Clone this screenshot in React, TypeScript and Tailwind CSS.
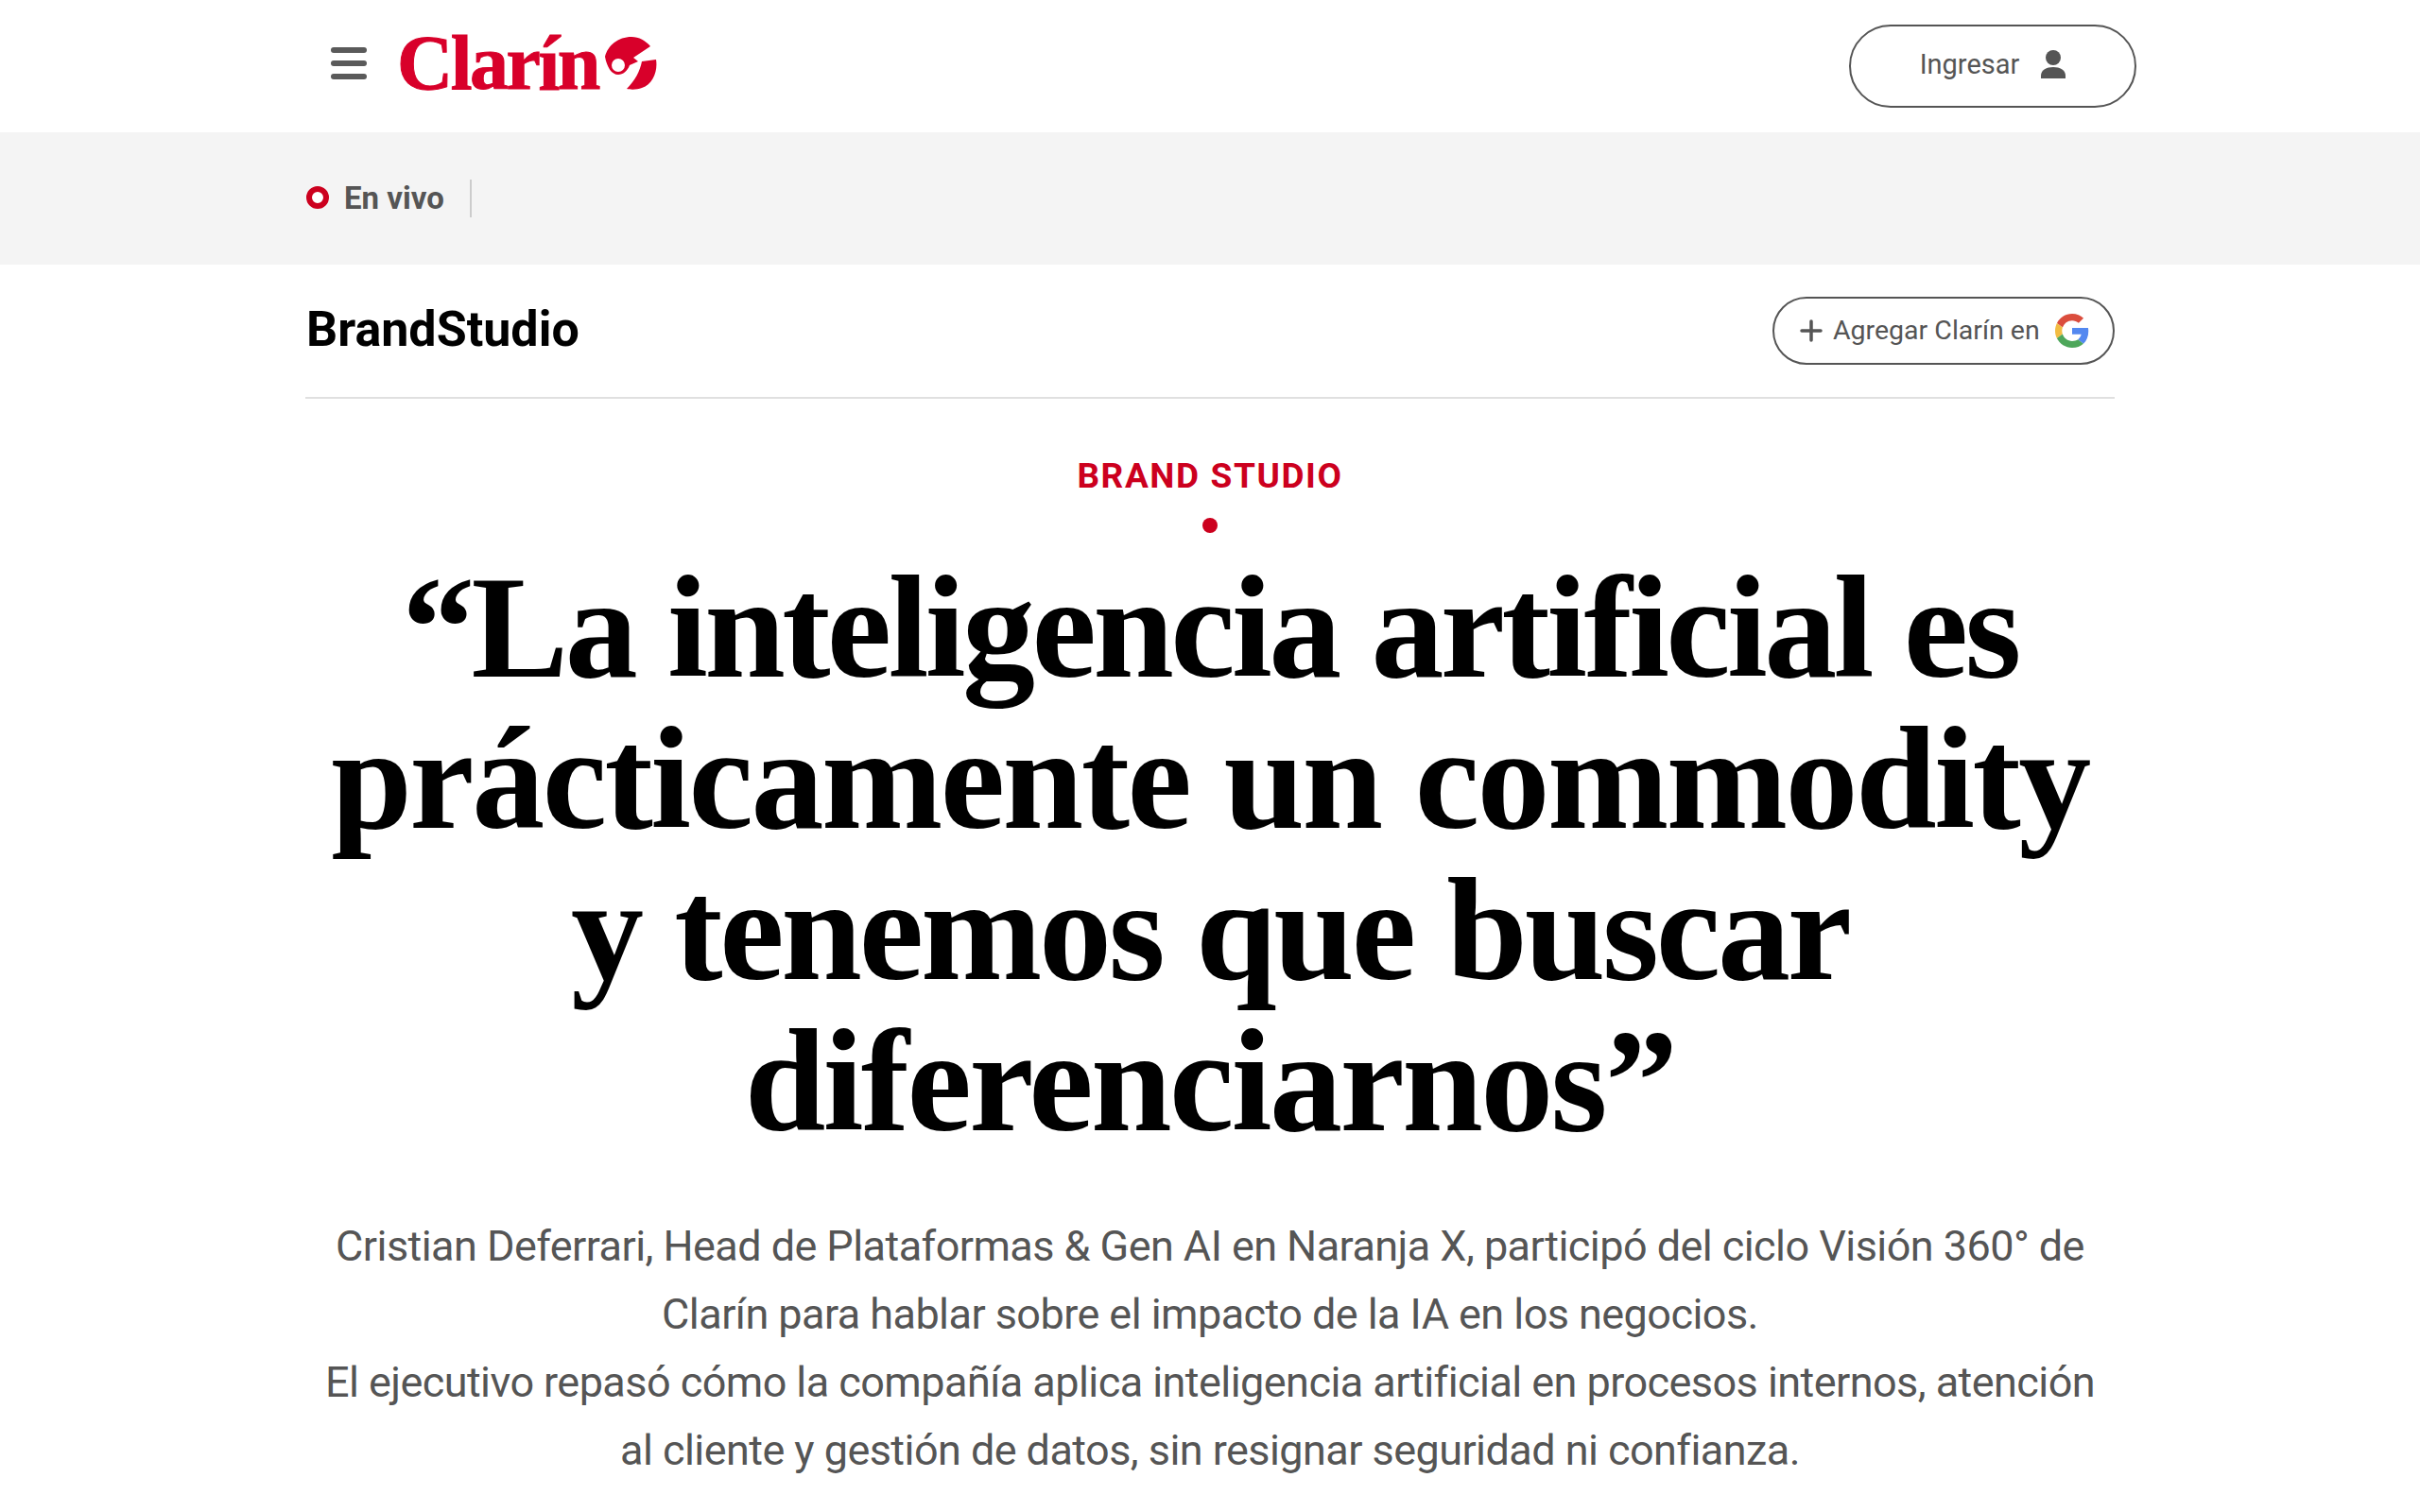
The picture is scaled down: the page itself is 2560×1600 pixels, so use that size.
import React from "react";

function Emblem() {
  return (
    <svg viewBox="0 0 56 56" className="w-[56px] h-[56px] ml-[6px]" fill="#d8002a">
      <path
        fillRule="evenodd"
        d="M1 21C4 9 15 0 29 0c8 0 15 4 20 10L31 22l5 4-9 4c-2 6-7 10-12 10C8 40 3 32 1 21zM22 30a7 7 0 1 1-14 0a7 7 0 1 1 14 0z"
      />
      <path d="M40 26l15-2c2 12-3 26-15 30-5 2-12 2-16 1 9-9 14-19 16-29z" />
    </svg>
  );
}

function GoogleIcon() {
  return (
    <svg viewBox="0 0 48 48" className="w-[36px] h-[36px]">
      <path fill="#DB4D3D" d="M24 9.500c3.500 0 6.700 1.200 9.200 3.600l6.900-6.900C35.900 2.400 30.500 0 24 0 14.600 0 6.500 5.400 2.600 13.200l8 6.200C12.400 13.700 17.700 9.500 24 9.500z" />
      <path fill="#5388F0" d="M47 24.500c0-1.600-.1-3.100-.4-4.500H24v9h12.900c-.6 3-2.200 5.500-4.700 7.200l7.700 6C44.400 38 47 31.800 47 24.500z" />
      <path fill="#F2BC42" d="M10.500 28.600c-.5-1.400-.8-3-.8-4.600s.3-3.200.8-4.600l-8-6.200C.9 16.500 0 20.100 0 24s.9 7.500 2.600 10.800l7.900-6.200z" />
      <path fill="#4EA75B" d="M24 48c6.500 0 11.900-2.100 15.900-5.800l-7.700-6c-2.200 1.500-5 2.300-8.200 2.300-6.300 0-11.600-4.200-13.500-9.900l-8 6.200C6.500 42.600 14.600 48 24 48z" />
    </svg>
  );
}

export default function App() {
  return (
    <div className="font-['Roboto','Liberation_Sans',sans-serif] bg-white h-[1600px] overflow-hidden">
      <header className="h-[140px] w-[1914px] mx-auto flex items-center justify-between">
        <div className="flex items-center pl-[27px] mt-[-6px]">
          <div className="flex flex-col gap-[8px] w-[38px]">
            <span className="block h-[6px] rounded-full bg-[#5a5a5a]" />
            <span className="block h-[6px] rounded-full bg-[#5a5a5a]" />
            <span className="block h-[6px] rounded-full bg-[#5a5a5a]" />
          </div>
          <div className="flex items-center ml-[32px]">
            <span className="font-['Liberation_Serif',serif] font-bold text-[82px] leading-none tracking-[-2.5px] text-[#d8002a] [-webkit-text-stroke:1px_#d8002a]">
              Clarín
            </span>
            <Emblem />
          </div>
        </div>
        <button className="mr-[-23px] mt-[-1px] w-[304px] h-[88px] border-2 border-[#555] rounded-full flex items-center justify-center gap-[23px] text-[#555] text-[29px]">
          <span className="mt-[-2px]">Ingresar</span>
          <svg viewBox="0 0 26 30" className="w-[26px] h-[30px] mt-[-4px]" fill="#555">
            <circle cx="13" cy="8" r="8" />
            <path d="M0 30v-3c0-6 6-9 13-9s13 3 13 9v3z" />
          </svg>
        </button>
      </header>

      <div className="h-[140px] bg-[#f4f4f4]">
        <div className="w-[1914px] h-full mx-auto flex items-center">
          <span className="ml-[1px] mt-[-2px] w-[24px] h-[24px] rounded-full border-[6px] border-[#cc001e] bg-white" />
          <span className="ml-[16px] w-[103px] font-bold text-[33px] text-[#555] whitespace-nowrap">En vivo</span>
          <span className="ml-[30px] w-[2px] h-[40px] bg-[#ccc]" />
        </div>
      </div>

      <main className="w-[1914px] mx-auto">
        <div className="h-[142px] border-b-2 border-[#e0e0e0] flex items-center justify-between">
          <span className="ml-[1px] font-bold text-[52px] text-black mt-[-2px]">BrandStudio</span>
          <button className="w-[362px] h-[72px] border-2 border-[#555] rounded-full flex items-center pl-[27px] text-[#555] text-[28.500px]">
            <svg viewBox="0 0 24 24" className="w-[24px] h-[24px]" stroke="#555" strokeWidth="3.500" strokeLinecap="round">
              <path d="M12 2v20M2 12h20" />
            </svg>
            <span className="ml-[11px] w-[218px] text-left whitespace-nowrap">Agregar Clarín en</span>
            <span className="ml-[17px]"><GoogleIcon /></span>
          </button>
        </div>

        <div className="mt-[60px] text-center text-[#cc001e] font-bold text-[37px] leading-[44px] tracking-[1.6px]">BRAND STUDIO</div>
        <div className="mt-[22px] mx-auto w-[16px] h-[16px] rounded-full bg-[#cc001e]" />

        <h1 className="mt-[20px] text-center font-['Liberation_Serif',serif] font-bold text-[154px] leading-[160px] text-black">
          <span className="tracking-[-3.6px]">“La inteligencia artificial es</span>
          <br />
          <span className="tracking-[-2.5px]">prácticamente un commodity</span>
          <br />
          <span className="tracking-[-3.2px]">y tenemos que buscar</span>
          <br />
          <span className="tracking-[-2.6px]">diferenciarnos”</span>
        </h1>

        <p className="mt-[59px] text-center text-[45px] leading-[72px] tracking-[-0.56px] text-[#555]">
          Cristian Deferrari, Head de Plataformas &amp; Gen AI en Naranja X, participó del ciclo Visión 360° de
          <br />
          Clarín para hablar sobre el impacto de la IA en los negocios.
          <br />
          El ejecutivo repasó cómo la compañía aplica inteligencia artificial en procesos internos, atención
          <br />
          al cliente y gestión de datos, sin resignar seguridad ni confianza.
        </p>
      </main>
    </div>
  );
}
